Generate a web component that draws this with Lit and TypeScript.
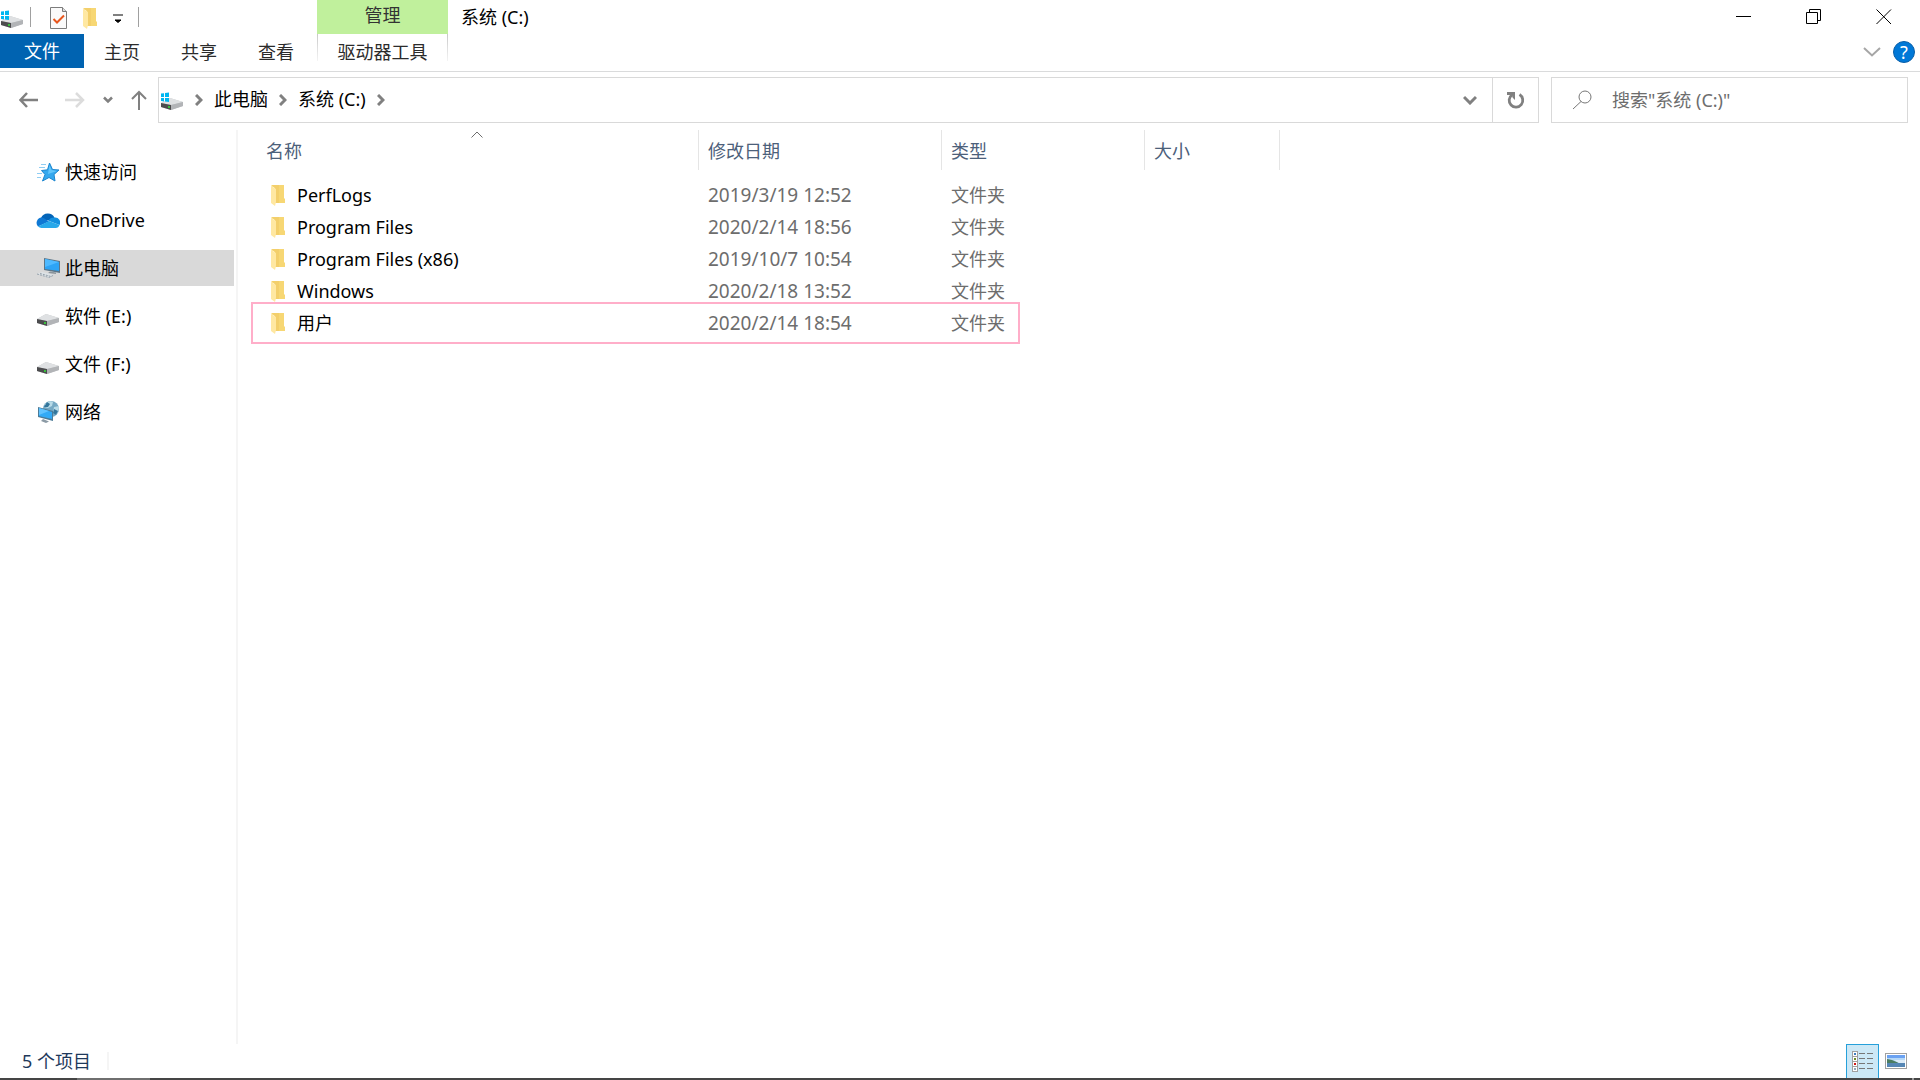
import { LitElement, html, svg, css } from "lit";
import { customElement, state } from "lit/decorators.js";
import { classMap } from "lit/directives/class-map.js";

const driveBody = svg`
  <polygon points="1,16 10,11 23,15 23,19 11,23 1,20" fill="#c4c6c8"/>
  <polygon points="1,16 10,11 23,15 11,18" fill="#dfe1e3"/>
  <polygon points="11,18 23,15 23,19 11,23" fill="#b2b4b7"/>
  <polygon points="1,16 11,18 11,23 1,20" fill="#4c4c4e"/>
  <rect x="8" y="19" width="2" height="2" fill="#39c03c"/>`;

const winLogo = svg`
  <path d="M1 6.600 4 6.200V10H1zM5 6 9 5.500V10H5zM1 11H4V14.400L1 14zM5 11H9V15L5 14.500z" fill="#00b7f1"/>`;

const systemDriveIcon = html`<svg class="icon" viewBox="0 0 24 24" aria-hidden="true">${driveBody}${winLogo}</svg>`;
const driveIcon = html`<svg class="icon" viewBox="0 1 24 24" aria-hidden="true">${driveBody}</svg>`;

const folderIcon = html`<svg class="folder" viewBox="0 0 14 21" aria-hidden="true">
  <path d="M0 1 1 0H13V13L14 14V18H4V3z" fill="#f7d774"/>
  <path d="M1 0H8V18H4V3z" fill="#f3cf6b"/>
  <path d="M0 1 5 4V17L4 21 0 18z" fill="#ffe8a2"/>
</svg>`;

const starIcon = html`<svg class="icon" viewBox="0 0 24 24" aria-hidden="true">
  <path d="M13.500 3 16.500 9.500 23 10 18 14.500 19 21 13 17.500 6.500 21 9 14.500 5.500 10.500 11.500 9.800z" fill="#35a8ee" stroke="#1c86cf"/>
  <path d="M13.500 5 15.500 10 21 11 12 14z" fill="#62c6fb"/>
  <path d="M5 4.500H10M3 7.500H9M1 13.500H6M1 17.500H5" stroke="#8fcdf3"/>
</svg>`;

const cloudIcon = html`<svg class="icon" viewBox="0 0 24 24" aria-hidden="true">
  <path d="M5 10A7.500 7.500 0 0 1 18.500 9.500L16 13 9 12z" fill="#0364b8"/>
  <path d="M5.500 9.500A5.400 5.400 0 0 0 2 18.500L13 13.500 8 10.200A5 5 0 0 0 5.500 9.500z" fill="#0f78d4"/>
  <path d="M18.500 9.500A5 5 0 0 1 23.500 17L12.500 12.700A6 6 0 0 1 18.500 9.500z" fill="#1490df"/>
  <path d="M2 18.500 13 13 23.500 17A4.200 4.200 0 0 1 19 20H5.500A5 5 0 0 1 2 18.500z" fill="#28a8ea"/>
</svg>`;

const computerIcon = html`<svg class="icon" viewBox="0 0 24 24" aria-hidden="true">
  <polygon points="8,2 24,5 24,17 8,14" fill="#5c7688"/>
  <polygon points="9,3 23,6 23,15 9,13" fill="#2da4f5"/>
  <polygon points="9,3 23,6 9,11" fill="#4fbaff"/>
  <path d="M14 15.500 20 16.500 20 18 12 17z" fill="#8a949c"/>
  <path d="M1 18 6 16 18 19 13 22z" fill="#dde3e7"/>
  <path d="M1 18 13 21.500 18 19M4 17.500 15 20.500" fill="none" stroke="#97a2ab" stroke-dasharray="2 1"/>
</svg>`;

const networkIcon = html`<svg class="icon" viewBox="0 0 24 24" aria-hidden="true">
  <circle cx="15" cy="9" r="8" fill="#76a9c4"/>
  <path d="M9 4Q13 0 17 2L16 6 12 8 9 7zM18 7 23 6Q23 12 20 15L17 12z" fill="#b9dbe8"/>
  <path d="M11 2 14 4 12 7 8 7zM18 9 22 11 20 15 17 13z" fill="#33769c"/>
  <polygon points="2,7 17,11 17,21 2,17" fill="#4c7b97"/>
  <polygon points="3,8 16,12 16,19 3,16" fill="#32aaf6"/>
  <polygon points="3,8 13,11 3,15" fill="#61c3ff"/>
  <path d="M7 19 13 21.500 10 23 5 21z" fill="#8b9aa5"/>
</svg>`;

const crumbChevron = html`<svg class="crumb-chevron" viewBox="0 0 8 12" aria-hidden="true">
  <path d="M1 1 6 6 1 11" fill="none" stroke="#808080" stroke-width="3"/>
</svg>`;

const places = [
  { label: "快速访问", icon: starIcon },
  { label: "OneDrive", icon: cloudIcon },
  { label: "此电脑", icon: computerIcon },
  { label: "软件 (E:)", icon: driveIcon },
  { label: "文件 (F:)", icon: driveIcon },
  { label: "网络", icon: networkIcon },
];

const folders = [
  { name: "PerfLogs", date: "2019/3/19 12:52" },
  { name: "Program Files", date: "2020/2/14 18:56" },
  { name: "Program Files (x86)", date: "2019/10/7 10:54" },
  { name: "Windows", date: "2020/2/18 13:52" },
  { name: "用户", date: "2020/2/14 18:54", marked: true },
];

const base = css`
  :host { box-sizing: border-box; }
  *, *::before, *::after { box-sizing: border-box; }
  button, input {
    font: inherit; color: inherit; background: none; border: 0;
    padding: 0; margin: 0; border-radius: 0; outline: 0;
  }
  button { display: flex; align-items: center; justify-content: center; flex: none; }
  a { color: inherit; text-decoration: none; }
  svg { display: block; flex: none; }
  .icon { width: 24px; height: 24px; }
  .folder { width: 14px; height: 21px; }
`;

@customElement("window-header")
class WindowHeader extends LitElement {
  static styles = [base, css`
    :host { display: block; }
    .header { display: flex; border-bottom: 1px solid #dadbdc; height: 72px; }
    .left { display: flex; flex-direction: column; width: 317px; flex: none; }
    .quick { display: flex; align-items: center; height: 34px; }
    .sep { width: 1px; height: 20px; background: #a0a0a0; margin: 0 6px; }
    .group { display: flex; align-items: center; gap: 16px; padding: 2px 9px 0 13px; }
    .tabs { display: flex; gap: 1px; height: 34px; color: #2b2b2b; }
    .tab { padding: 2px 20px 0; }
    .file { width: 84px; background: #0063b1; color: #fff; padding-top: 0; margin-right: -1px; }
    .context { width: 131px; flex: none; display: flex; flex-direction: column; }
    .context-name {
      height: 34px; background: #c0f09c; color: #333; display: flex;
      align-items: center; justify-content: center; padding-bottom: 4px;
    }
    .context .tab {
      height: 34px; padding: 2px 0 0; color: #2b2b2b;
      background:
        linear-gradient(#c8c8c8, #f4f4f4) left top / 1px 27px no-repeat,
        linear-gradient(#c8c8c8, #f4f4f4) right top / 1px 27px no-repeat;
    }
    .title { margin: 0; font-size: 18px; font-weight: 400; line-height: 34px; padding-left: 13px; flex: 1; }
    .right { display: flex; flex-direction: column; align-items: flex-end; flex: none; }
    .window-buttons { display: flex; height: 34px; padding-right: 1px; }
    .window-buttons button { width: 70px; }
    .help { display: flex; align-items: center; gap: 12px; height: 36px; padding-right: 5px; }
    .help-dot { width: 22px; height: 22px; border-radius: 50%; background: #0078d7; border: 1px solid #0a5fa8; color: #fff; font-size: 18px; line-height: 20px; }
  `];

  render() {
    return html`
      <header class="header">
        <div class="left">
          <div class="quick">
            ${systemDriveIcon}
            <span class="sep"></span>
            <div class="group">
              <button aria-label="属性">
                <svg width="17" height="22" viewBox="0 0 17 22">
                  <path d="M.5 .5H12.500L16.500 4.500V21.500H.5z" fill="#fafafa" stroke="#7c7c7c"/>
                  <path d="M12.500 .5V4.500H16.500" fill="#ddd" stroke="#7c7c7c"/>
                  <path d="M3.500 12 7 15.500 14 8.500" fill="none" stroke="#e8561c" stroke-width="2"/>
                </svg>
              </button>
              <button aria-label="新建文件夹">${folderIcon}</button>
              <button aria-label="自定义快速访问工具栏">
                <svg width="10" height="10" viewBox="0 0 10 10">
                  <path d="M0 2H10M2 7H8L5 9.500z" fill="#000" stroke="#000"/>
                </svg>
              </button>
            </div>
            <span class="sep"></span>
          </div>
          <nav class="tabs">
            <button class="tab file">文件</button>
            <button class="tab">主页</button>
            <button class="tab">共享</button>
            <button class="tab">查看</button>
          </nav>
        </div>
        <div class="context">
          <div class="context-name">管理</div>
          <button class="tab">驱动器工具</button>
        </div>
        <h1 class="title">系统 (C:)</h1>
        <div class="right">
          <div class="window-buttons">
            <button aria-label="最小化"><svg width="17" height="17" viewBox="0 0 17 17"><path d="M0 7.500H15" stroke="#000"/></svg></button>
            <button aria-label="向下还原"><svg width="17" height="17" viewBox="0 0 17 17"><path d="M.5 3.500H11.500V14.500H.5zM3.500 3V.5H14.500V11.500H12" fill="none" stroke="#000"/></svg></button>
            <button aria-label="关闭"><svg width="17" height="17" viewBox="0 0 17 17"><path d="M.5 .5 15 15M15 .5 .5 15" stroke="#000"/></svg></button>
          </div>
          <div class="help">
            <button aria-label="展开功能区"><svg width="18" height="10" viewBox="0 0 18 10"><path d="M1 1 9 8.500 17 1" fill="none" stroke="#a6a6a6" stroke-width="2"/></svg></button>
            <button class="help-dot" aria-label="帮助">?</button>
          </div>
        </div>
      </header>`;
  }
}

@customElement("address-bar")
class AddressBar extends LitElement {
  static styles = [base, css`
    :host { display: block; }
    .bar { display: flex; padding: 5px 12px 7px 0; }
    .nav { display: flex; align-items: center; gap: 18px; width: 158px; flex: none; padding-left: 19px; }
    .back { width: 28px; justify-content: flex-start; }
    .address { display: flex; flex: 1; height: 46px; border: 1px solid #d9d9d9; margin-right: 12px; }
    .crumbs { display: flex; align-items: center; flex: 1; gap: 11px; padding: 0 0 2px 1px; }
    .crumb-chevron { width: 8px; height: 12px; margin-top: 2px; }
    .drop { width: 44px; }
    .refresh { width: 46px; border-left: 1px solid #d9d9d9; }
    .search { display: flex; align-items: center; gap: 20px; width: 357px; height: 46px; border: 1px solid #d9d9d9; padding-left: 20px; }
    .search input { flex: 1; min-width: 0; height: 44px; }
    .search input::placeholder { color: #6d6d6d; opacity: 1; }
  `];

  render() {
    return html`
      <div class="bar">
        <div class="nav">
          <button class="back" aria-label="后退"><svg width="20" height="16" viewBox="0 0 20 16"><path d="M8 1 1.500 8 8 15M1 8H19" fill="none" stroke="#808080" stroke-width="2.500"/></svg></button>
          <button aria-label="前进"><svg width="20" height="16" viewBox="0 0 20 16"><path d="M11 1 18 8 11 15M18 8H0" fill="none" stroke="#dcdcdc" stroke-width="2.500"/></svg></button>
          <button aria-label="最近浏览的位置"><svg width="10" height="8" viewBox="0 0 10 8"><path d="M1 1.500 5 5.500 9 1.500" fill="none" stroke="#808080" stroke-width="2.500"/></svg></button>
          <button aria-label="向上"><svg width="16" height="20" viewBox="0 0 16 20"><path d="M1 9 8 2 15 9M8 2V20" fill="none" stroke="#808080" stroke-width="2"/></svg></button>
        </div>
        <div class="address">
          <nav class="crumbs">
            ${systemDriveIcon}${crumbChevron}
            <a href="#pc">此电脑</a>${crumbChevron}
            <a href="#c">系统 (C:)</a>${crumbChevron}
          </nav>
          <button class="drop" aria-label="以前的位置"><svg width="14" height="10" viewBox="0 0 14 10"><path d="M1 2 7 8 13 2" fill="none" stroke="#808080" stroke-width="3"/></svg></button>
          <button class="refresh" aria-label="刷新"><svg width="18" height="18" viewBox="0 0 18 18"><path d="M12.500 3.500A6.800 6.800 0 1 1 5 3.800" fill="none" stroke="#808080" stroke-width="2.800"/><path d="M0 1H8V9L5.500 6.500 5 4H0z" fill="#808080"/></svg></button>
        </div>
        <div class="search">
          <svg width="20" height="20" viewBox="0 0 20 20" aria-hidden="true"><circle cx="13" cy="7" r="6" fill="none" stroke="#777"/><path d="M9 11.500 1 19" stroke="#777"/></svg>
          <input type="text" aria-label="搜索" placeholder='搜索"系统 (C:)"' />
        </div>
      </div>`;
  }
}

@customElement("nav-pane")
class NavPane extends LitElement {
  @state() private current = "此电脑";

  static styles = [base, css`
    :host { display: block; width: 238px; flex: none; border-right: 2px solid #f5f5f5; }
    .list { list-style: none; margin: 0; padding: 24px 2px 0 0; display: flex; flex-direction: column; gap: 12px; }
    .place { width: 100%; height: 36px; justify-content: flex-start; gap: 5px; padding-left: 36px; color: #000; }
    .selected { background: #d9d9d9; }
  `];

  render() {
    return html`<ul class="list">
      ${places.map((p) => html`<li>
        <button class=${classMap({ place: true, selected: p.label === this.current })}
          @click=${() => { this.current = p.label; }}>${p.icon}<span>${p.label}</span></button>
      </li>`)}
    </ul>`;
  }
}

@customElement("file-list")
class FileList extends LitElement {
  static styles = [base, css`
    :host { display: block; flex: 1; min-width: 0; }
    .table { border-collapse: separate; border-spacing: 0; table-layout: fixed; width: 1042px; }
    .c-name { width: 461px; }
    .c-date { width: 243px; }
    .c-type { width: 203px; }
    .c-size { width: 135px; }
    th {
      height: 40px; padding: 1px 0 0 9px; text-align: left; font-weight: 400;
      color: #4c607a; border-right: 1px solid #e5e5e5; position: relative;
    }
    th:first-child { padding-left: 28px; }
    .sort { position: absolute; left: 50%; top: 1px; margin-left: 3px; }
    .body::before { content: ""; display: block; height: 9px; }
    td { height: 32px; padding: 0 0 0 9px; color: #6d6d6d; white-space: nowrap; }
    td:first-child { padding-left: 33px; }
    .date { font-size: 19px; }
    .name { display: flex; align-items: center; gap: 12px; color: #000; }
    tr { position: relative; }
    .marked td:first-child::after {
      content: ""; position: absolute; left: 13px; top: -5px;
      width: 769px; height: 42px; border: 2px solid #ffaec9; pointer-events: none;
    }
  `];

  render() {
    return html`<table class="table">
      <colgroup><col class="c-name" /><col class="c-date" /><col class="c-type" /><col class="c-size" /></colgroup>
      <thead><tr>
        <th aria-sort="ascending">名称
          <svg class="sort" width="12" height="8" viewBox="0 0 12 8" aria-hidden="true"><path d="M.5 6.500 6 1 11.500 6.500" fill="none" stroke="#6d6d6d"/></svg>
        </th>
        <th>修改日期</th><th>类型</th><th>大小</th>
      </tr></thead>
      <tbody class="body">
        ${folders.map((f) => html`<tr class=${classMap({ marked: !!f.marked })}>
          <td><div class="name">${folderIcon}<span>${f.name}</span></div></td>
          <td class="date">${f.date}</td><td>文件夹</td><td></td>
        </tr>`)}
      </tbody>
    </table>`;
  }
}

@customElement("status-bar")
class StatusBar extends LitElement {
  static styles = [base, css`
    :host { display: block; }
    .bar { display: flex; align-items: stretch; height: 34px; padding: 0 8px 0 22px; color: #1e395b; }
    .count { display: flex; align-items: center; flex: 1; gap: 16px; }
    .tick { width: 2px; height: 18px; background: #f5f5f5; }
    .view { width: 33px; }
    .on { background: #cce8f6; border: 1px solid #26a0da; border-bottom: 0; }
    .edge { height: 2px; display: flex; justify-content: space-between; padding: 0 6px 0 77px; background: #454545; }
    .edge::before { content: ""; width: 73px; background: #6f6f6f; }
    .edge::after { content: ""; width: 2px; background: #9a9a9a; }
  `];

  render() {
    const dots = ["#3c7fc0", "#6f8f2c", "#d01818", "#8fa9bd"];
    return html`
      <footer class="bar">
        <div class="count"><span>5 个项目</span><span class="tick"></span></div>
        <button class="view on" aria-label="详细信息" aria-pressed="true">
          <svg width="21" height="21" viewBox="0 0 21 21">
            <rect x=".5" y=".5" width="5" height="20" fill="#fff" stroke="#a0a0a0"/>
            ${dots.map((c, i) => svg`
              <path d=${`M1 ${5.5 + i * 5}H6`} stroke="#a0a0a0"/>
              <rect x="2" y=${2 + i * 5} width="2" height="2" fill=${c}/>
              <path d=${`M7 ${2.5 + i * 5}H13M15 ${2.5 + i * 5}H21`} stroke="#777"/>`)}
          </svg>
        </button>
        <button class="view" aria-label="大缩略图" aria-pressed="false">
          <svg width="22" height="16" viewBox="0 0 22 16">
            <rect x=".5" y=".5" width="21" height="15" fill="#fff" stroke="#a0a0a0"/>
            <rect x="2" y="2" width="18" height="12" fill="#b5d8f8"/>
            <rect x="2" y="2" width="18" height="3" fill="#6ba2f2"/>
            <path d="M2 6 7 7 14 10H2z" fill="#4b7d62"/>
            <rect x="2" y="10" width="18" height="4" fill="#5586b4"/>
            <path d="M9 7H20V10H14z" fill="#dcebf7"/>
          </svg>
        </button>
      </footer>
      <div class="edge"></div>`;
  }
}

@customElement("app-root")
class AppRoot extends LitElement {
  static styles = css`
    :host {
      display: flex; flex-direction: column; min-height: 100vh; background: #fff; color: #000;
      font: 18px/24px "Noto Sans", "Noto Sans CJK SC", sans-serif;
    }
    .main { display: flex; flex: 1; }
  `;

  render() {
    return html`
      <window-header></window-header>
      <address-bar></address-bar>
      <div class="main">
        <nav-pane></nav-pane>
        <file-list></file-list>
      </div>
      <status-bar></status-bar>`;
  }
}
